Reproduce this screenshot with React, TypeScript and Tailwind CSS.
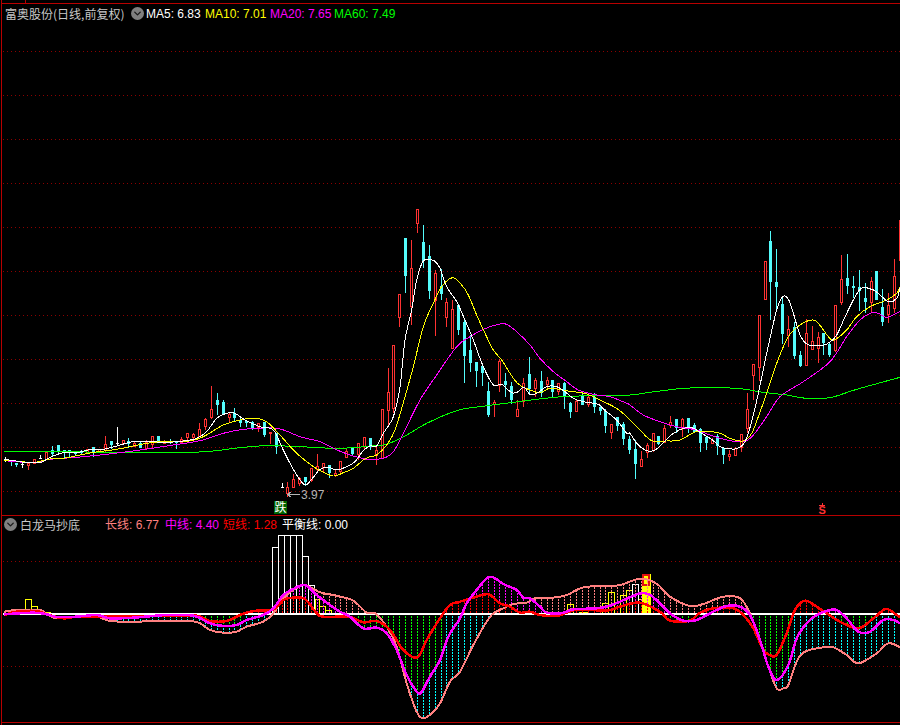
import { ChevronDown } from "lucide-react";

type Pt = [number, number];
type Candle = [string, number, number, number, number];

const RED = "#ff3232";
const CYAN = "#54fcfc";

// candle values are read off the zoomed crops: [colour, high, bodyTop, bodyBottom, low]
const candlesA: Candle[] = [
  ["w", 232, 236, 240, 245], ["c", 240, 240, 246, 258], ["c", 248, 250, 255, 262], ["w", 250, 252, 254, 265],
  ["r", 248, 250, 256, 270], ["r", 238, 238, 248, 250], ["w", 225, 235, 237, 238], ["r", 215, 215, 238, 240],
  ["c", 198, 210, 222, 228], ["c", 195, 195, 215, 225], ["c", 210, 210, 214, 235], ["c", 210, 210, 216, 232],
  ["c", 215, 218, 223, 228], ["c", 210, 212, 218, 225], ["r", 207, 208, 216, 218], ["c", 200, 200, 215, 230],
  ["r", 207, 208, 214, 215], ["r", 168, 192, 210, 215], ["c", 183, 183, 195, 208], ["w", 140, 190, 192, 195],
  ["r", 180, 181, 190, 195], ["c", 175, 182, 192, 205], ["r", 187, 188, 198, 200], ["c", 183, 190, 203, 205],
  ["r", 180, 185, 203, 205], ["r", 168, 168, 192, 205], ["c", 168, 168, 188, 190], ["r", 180, 182, 190, 192],
  ["c", 178, 182, 190, 192], ["c", 183, 183, 190, 208], ["r", 172, 178, 185, 190], ["r", 160, 160, 172, 182],
  ["r", 160, 163, 172, 180], ["r", 130, 148, 168, 170], ["r", 115, 118, 138, 150], ["r", 18, 88, 110, 118],
  ["c", 40, 60, 75, 105], ["c", 60, 65, 105, 105], ["r", 100, 102, 110, 125], ["c", 85, 98, 115, 122],
  ["c", 115, 120, 128, 140], ["c", 122, 122, 128, 142], ["c", 122, 125, 145, 150], ["r", 130, 130, 140, 155],
  ["c", 125, 125, 165, 170], ["r", 155, 155, 160, 192], ["c", 160, 160, 200, 222], ["w", 308, 322, 323, 325],
  ["r", 305, 322, 340, 350], ["r", 282, 298, 320, 325], ["r", 292, 295, 308, 318], ["c", 292, 292, 305, 318],
  ["r", 263, 263, 300, 305], ["r", 222, 258, 268, 280], ["r", 250, 250, 262, 275], ["c", 255, 255, 280, 295],
  ["r", 270, 278, 285, 290], ["r", 243, 243, 272, 280], ["r", 205, 213, 230, 235], ["c", 205, 205, 222, 228],
  ["r", 188, 190, 222, 240], ["r", 172, 172, 198, 208],
];
const candlesB: Candle[] = [
  ["c", 715, 715, 740, 750], ["r", 740, 750, 765, 795], ["r", 628, 628, 775, 778], ["r", 505, 577, 630, 680],
  ["r", 435, 435, 625, 640], ["r", 283, 283, 352, 380], ["c", 115, 115, 228, 278], ["r", 120, 205, 318, 375],
  ["r", 28, 28, 68, 98], ["c", 75, 127, 183, 205], ["c", 135, 168, 272, 298], ["r", 210, 220, 300, 408],
  ["c", 208, 258, 282, 300], ["r", 295, 305, 350, 380], ["r", 300, 328, 445, 445], ["c", 312, 315, 390, 405],
  ["c", 360, 365, 467, 548], ["c", 405, 450, 490, 515], ["c", 487, 487, 513, 560], ["c", 490, 498, 518, 558],
  ["c", 547, 573, 645, 650], ["r", 600, 605, 612, 650], ["r", 478, 484, 555, 575], ["c", 518, 543, 555, 590],
  ["c", 545, 558, 600, 612], ["r", 600, 628, 648, 650], ["r", 535, 550, 603, 620], ["c", 472, 522, 568, 580],
  ["r", 535, 540, 565, 590], ["c", 514, 543, 578, 590], ["r", 532, 541, 553, 565], ["c", 540, 541, 575, 592],
  ["r", 548, 550, 572, 585], ["c", 545, 550, 590, 628], ["c", 605, 610, 636, 654], ["r", 600, 604, 632, 632],
  ["c", 572, 588, 615, 615], ["r", 578, 591, 613, 622], ["c", 580, 592, 622, 638], ["c", 618, 622, 634, 645],
  ["c", 628, 632, 678, 698], ["r", 672, 673, 696, 716], ["c", 650, 652, 678, 692], ["c", 665, 672, 718, 735],
  ["c", 708, 716, 750, 762],
];
const candlesC: Candle[] = [
  ["c", 660, 688, 732, 778], ["r", 694, 718, 738, 740], ["r", 668, 675, 695, 714], ["r", 640, 640, 690, 695],
  ["c", 648, 648, 672, 675], ["r", 615, 623, 665, 670], ["r", 587, 606, 615, 625], ["c", 597, 598, 625, 640],
  ["r", 595, 596, 625, 652], ["c", 594, 595, 623, 640], ["c", 610, 615, 635, 640], ["c", 625, 628, 670, 695],
  ["c", 650, 652, 668, 690], ["r", 655, 660, 670, 672], ["c", 642, 648, 678, 705], ["c", 683, 684, 704, 732],
  ["r", 690, 702, 707, 722], ["r", 682, 685, 705, 708], ["r", 642, 643, 680, 695], ["r", 518, 568, 623, 640],
  ["r", 433, 433, 464, 540], ["r", 286, 286, 440, 482], ["r", 124, 124, 238, 238], ["c", 33, 63, 185, 300],
  ["c", 87, 186, 200, 275], ["c", 232, 252, 342, 372], ["r", 288, 328, 344, 380], ["c", 305, 320, 408, 418],
  ["c", 392, 405, 438, 440], ["r", 296, 340, 435, 437], ["r", 318, 364, 388, 390], ["r", 335, 350, 385, 430],
  ["c", 338, 340, 370, 405], ["c", 370, 372, 404, 412], ["r", 256, 256, 390, 395], ["r", 105, 178, 245, 255],
  ["c", 102, 175, 198, 222], ["c", 168, 198, 204, 235], ["c", 150, 202, 212, 272], ["c", 190, 235, 245, 278],
  ["r", 172, 184, 245, 280], ["c", 154, 154, 240, 240], ["c", 208, 260, 305, 318], ["r", 220, 256, 282, 308],
  ["r", 118, 168, 265, 280], ["r", 0, 0, 120, 120],
];

const candleX = (i: number) => Math.round(4.7 + 5.89 * i);

const candles: Candle[] = [
  ...candlesA.map((c): Candle => [c[0], 380 + c[1] / 3, 380 + c[2] / 3, 380 + c[3] / 3, 380 + c[4] / 3]),
  ...candlesB.map((c): Candle => [c[0], 200 + c[1] / 3, 200 + c[2] / 3, 200 + c[3] / 3, 200 + c[4] / 3]),
  ...candlesC.map((c): Candle => [c[0], 220 + c[1] / 3, 220 + c[2] / 3, 220 + c[3] / 3, 220 + c[4] / 3]),
];

const section = (pts: number[], ox: number, oy: number, from: number, to: number): Pt[] => {
  const out: Pt[] = [];
  for (let i = 0; i < pts.length; i += 2) {
    const x = ox + pts[i] / 3;
    if (x >= from && x < to) out.push([x, oy + pts[i + 1] / 3]);
  }
  return out;
};

const mainLine = (a: number[], b: number[], c: number[]) => [
  ...section(a, 0, 380, 0, 370),
  ...section(b, 370, 200, 370, 630),
  ...section(c, 630, 220, 630, 901),
];
const subLine = (a: number[], b: number[], c: number[]) => [
  ...section(a, 0, 515, 0, 340),
  ...section(b, 340, 560, 340, 620),
  ...section(c, 620, 560, 620, 901),
];

const ma5 = mainLine(
  [12,238,40,242,75,247,120,248,150,232,190,218,230,218,275,208,310,208,350,198,400,185,450,185,500,187,550,183,590,175,620,155,650,115,680,100,705,100,735,120,780,140,820,150,845,200,870,250,900,300,917,315,935,298,960,268,985,262,1010,270,1040,260,1065,245,1090,212],
  [0,738,20,738,40,700,70,650,90,560,105,420,125,330,140,240,160,183,190,181,210,205,230,260,260,305,285,360,310,420,340,500,370,555,395,553,425,578,445,575,462,562,480,583,500,580,530,560,560,560,585,575,610,595,640,605,685,613,705,632,740,660,770,700],
  [0,640,20,670,50,692,75,690,100,668,130,640,170,622,190,625,215,640,245,658,270,680,290,685,320,686,345,665,365,605,385,520,410,400,440,270,458,230,475,238,490,280,510,345,530,372,555,378,590,372,620,345,650,280,690,208,725,208,745,220,775,245,800,235,810,205],
);
const ma10 = mainLine(
  [12,240,60,244,100,248,150,237,190,235,240,225,275,218,350,208,400,198,470,186,550,185,590,178,620,165,670,135,730,118,770,115,800,125,840,165,880,210,920,245,960,272,1000,288,1030,278,1060,265,1090,240],
  [0,770,20,765,50,735,75,690,105,590,130,500,160,380,190,310,215,260,248,233,275,255,295,285,320,345,345,400,370,450,395,480,420,520,445,552,480,570,510,578,540,565,585,572,610,575,650,582,690,600,740,625,770,650],
  [0,600,30,630,65,662,110,663,150,660,200,635,265,638,300,655,340,663,365,640,385,590,410,520,440,430,475,350,510,315,545,300,565,310,595,350,612,360,650,330,680,290,720,260,770,240,800,220,810,200],
);
const ma20 = mainLine(
  [12,242,100,248,150,238,230,232,300,225,400,213,500,198,600,182,670,160,730,148,830,145,900,170,960,185,1000,205,1050,225,1100,238],
  [0,778,40,775,70,755,100,700,150,600,200,525,260,440,300,410,340,388,385,373,410,373,440,395,480,435,510,475,550,515,590,545,625,570,680,585,720,590,770,610],
  [0,555,40,585,90,605,140,620,200,630,240,645,290,660,340,665,370,645,410,590,450,530,520,485,600,425,650,350,690,300,720,280,745,280,770,292,810,275],
);
const ma60 = mainLine(
  [12,214,180,214,330,218,410,218,550,218,640,213,720,203,800,197,900,200,1000,205,1060,203],
  [0,738,50,733,110,705,170,670,260,632,330,620,430,607,500,598,580,590,700,586],
  [0,525,60,517,150,506,240,502,330,506,400,517,470,525,530,535,600,533,680,508,810,472],
);

const longLine = subLine(
  [12,290,50,285,120,285,140,298,170,310,230,305,290,305,330,318,400,320,480,318,570,318,600,325,630,345,670,353,710,350,740,335,790,320,820,295,850,250,880,225,915,210,960,232,1000,240],
  [0,110,40,122,80,158,105,160,140,200,170,260,200,370,230,455,250,475,275,460,300,430,330,365,360,335,400,255,440,185,460,160,490,145,520,132,560,128,585,115,640,113,680,105,730,82,800,78],
  [0,75,50,58,80,58,115,75,150,110,210,138,250,132,310,110,360,115,390,160,420,240,445,320,470,385,490,385,505,375,530,305,555,275,610,262,640,262,680,285,715,310,770,280,800,252,820,252,840,262],
);
const midLine = subLine(
  [12,298,100,293,140,298,170,306,230,305,290,300,330,310,400,308,500,300,580,302,630,325,670,333,710,330,740,315,790,300,820,280,850,240,880,222,915,210,950,240,990,270],
  [0,155,30,170,70,205,110,203,140,220,170,270,200,345,232,397,245,395,270,350,300,300,325,230,360,175,380,130,410,90,440,55,460,52,490,72,530,90,550,113,570,115,600,140,620,158,660,160,680,155,700,148,770,145,800,140],
  [0,125,60,100,90,105,120,130,150,160,190,182,230,180,280,155,320,138,360,140,390,165,420,240,445,320,470,360,505,315,530,235,560,190,590,165,630,150,650,150,680,175,715,215,750,215,790,180,820,180,840,190],
);
const shortLine = subLine(
  [12,300,50,290,110,288,140,298,190,310,230,305,300,305,400,305,500,302,590,302,630,318,680,318,720,300,760,288,820,283,850,255,880,248,915,252,950,295,970,305],
  [0,170,30,170,70,187,110,183,150,210,190,270,232,292,260,240,300,175,330,135,360,125,400,113,445,103,480,130,510,140,540,158,570,155,600,165,650,168,680,158,720,148,800,152],
  [0,140,60,128,120,155,150,182,210,182,240,158,280,145,340,145,370,165,400,205,430,270,450,285,470,285,500,220,525,150,555,122,590,140,620,160,660,185,715,205,760,175,790,150,805,148,840,172],
);

// catmull-rom through the read points, so the averages don't look like straight pieces
const smooth = (p: Pt[]) => {
  let d = `M${p[0][0]} ${p[0][1]}`;
  for (let i = 0; i < p.length - 1; i++) {
    const a = p[Math.max(i - 1, 0)];
    const b = p[i];
    const c = p[i + 1];
    const e = p[Math.min(i + 2, p.length - 1)];
    d += ` C${b[0] + (c[0] - a[0]) / 6} ${b[1] + (c[1] - a[1]) / 6} ${c[0] - (e[0] - b[0]) / 6} ${c[1] - (e[1] - b[1]) / 6} ${c[0]} ${c[1]}`;
  }
  return d;
};

const valueAt = (p: Pt[], x: number) => {
  if (x <= p[0][0]) return p[0][1];
  for (let i = 0; i < p.length - 1; i++) {
    if (x >= p[i][0] && x <= p[i + 1][0]) {
      const t = (x - p[i][0]) / (p[i + 1][0] - p[i][0]);
      return p[i][1] + (p[i + 1][1] - p[i][1]) * t;
    }
  }
  return p[p.length - 1][1];
};

const BASE = 613;
const greenToMid: Pt[] = [[0, 20], [195, 242], [345, 443], [750, 790]];
const greenToShort: Pt[] = [[262, 272], [443, 447], [665, 692], [836, 885]];
const inZone = (zones: Pt[], x: number) => zones.some(([a, b]) => x >= a && x <= b);

const grid = [51, 95, 139, 183, 227, 271, 315, 359, 403, 447, 491];

// [left, top]
const whiteBoxes: Pt[] = [[272, 547], [278, 535], [284, 535], [290, 535], [296, 535], [302, 556], [308, 585], [632, 584]];
const yellowBoxes: [number, number, number][] = [
  [25, 6, 599], [31, 6, 606], [46, 4, 612], [315, 4, 599], [319, 6, 606], [325, 6, 610],
  [567, 6, 604], [579, 9, 612], [602, 6, 603], [608, 6, 592], [620, 6, 595], [626, 6, 590], [638, 4, 599],
];

function Dropdown() {
  return (
    <span className="flex size-[13px] items-center justify-center rounded-full bg-[#808080]">
      <ChevronDown className="size-[11px] text-[#1c1c1c]" strokeWidth={3} />
    </span>
  );
}

function CandleMark({ c, x }: { c: Candle; x: number }) {
  const [kind, hi, top, bot, lo] = c;
  const color = kind === "r" ? RED : kind === "c" ? CYAN : "#ffffff";
  const h = Math.max(Math.round(bot) - Math.round(top), 1);
  return (
    <g>
      <line x1={x + 0.5} x2={x + 0.5} y1={Math.round(hi)} y2={Math.round(lo)} stroke={color} />
      {kind === "r" && <rect x={x - 0.5} y={Math.round(top) + 0.5} width={2} height={h} fill="#000" stroke={color} />}
      {kind === "c" && <rect x={x - 1} y={Math.round(top)} width={3} height={h} fill={color} />}
      {kind === "w" && <rect x={x - 1} y={Math.round(top)} width={3} height={1} fill={color} />}
    </g>
  );
}

function DotBar({ x, y, color }: { x: number; y: number; color: string }) {
  return <line x1={x + 0.5} x2={x + 0.5} y1={BASE} y2={y} stroke={color} strokeDasharray="2 1" />;
}

export default function App() {
  const xs = candles.map((_, i) => candleX(i));
  return (
    <div className="h-[725px] w-[900px] overflow-hidden bg-black pl-px font-['Liberation_Sans','Noto_Sans_CJK_SC',sans-serif] text-[12px] leading-none">
      <div className="flex h-full flex-col border-l border-[#b80000]">
        {/* top strip with the small tick */}
        <div className="h-[3px] shrink-0 pl-[23px]">
          <div className="h-full w-px bg-[#b80000]" />
        </div>

        {/* main chart */}
        <div className="flex h-[513px] shrink-0 flex-col border-y border-[#b80000]">
          <div className="flex h-[20px] shrink-0 items-center pb-px pl-[3px]">
            <span className="w-[126px] font-['Noto_Sans_CJK_SC',sans-serif] whitespace-nowrap text-[#c8c8c8]">富奥股份(日线,前复权)</span>
            <Dropdown />
            <span className="ml-[2px] w-[59px] whitespace-nowrap text-white">MA5: 6.83</span>
            <span className="w-[65px] whitespace-nowrap text-[#ffff00]">MA10: 7.01</span>
            <span className="w-[64px] whitespace-nowrap text-[#ff00ff]">MA20: 7.65</span>
            <span className="whitespace-nowrap text-[#00ff00]">MA60: 7.49</span>
          </div>
          <svg className="block" width={898} height={491} viewBox="2 24 898 491">
            <g shapeRendering="crispEdges">
              {grid.map((y) => (
                <line key={y} x1={3} x2={900} y1={y + 0.5} y2={y + 0.5} stroke="#8c0000" strokeDasharray="1 3" />
              ))}
              {candles.map((c, i) => (
                <CandleMark key={i} c={c} x={xs[i]} />
              ))}
              <path d={smooth(ma60)} fill="none" stroke="#00ff00" />
              <path d={smooth(ma20)} fill="none" stroke="#ff00ff" />
              <path d={smooth(ma10)} fill="none" stroke="#ffff00" />
              <path d={smooth(ma5)} fill="none" stroke="#ffffff" />
              <path d="M287.5 494.5H300M287.5 494.5l4 -3M287.5 494.5l4 3" fill="none" stroke="#b4b4b4" />
              <rect x={274} y={501} width={13} height={13} fill="#006400" />
              <rect x={819} y={505} width={6} height={1} fill="#ff3232" />
              <rect x={822} y={503} width={1} height={2} fill="#ff3232" />
            </g>
            <text x={301} y={499} fill="#b4b4b4" fontSize={12}>3.97</text>
            <text x={274.5} y={512} fill="#ffffff" fontSize={12} className="font-['Noto_Sans_CJK_SC',sans-serif]">跌</text>
            <text x={818.5} y={514} fill="#ff3232" fontSize={11} fontWeight={700}>S</text>
          </svg>
        </div>

        {/* indicator */}
        <div className="flex h-[207px] shrink-0 flex-col border-b border-[#b80000]">
          <div className="flex h-[17px] shrink-0 items-center pl-[2px]">
            <Dropdown />
            <span className="ml-[3px] w-[85px] font-['Noto_Sans_CJK_SC',sans-serif] whitespace-nowrap text-[#c8c8c8]">白龙马抄底</span>
            <span className="w-[60px] whitespace-nowrap text-[#ff8080]">长线: 6.77</span>
            <span className="w-[58px] whitespace-nowrap text-[#ff00ff]">中线: 4.40</span>
            <span className="w-[59px] whitespace-nowrap text-[#ff0000]">短线: 1.28</span>
            <span className="whitespace-nowrap text-white">平衡线: 0.00</span>
          </div>
          <svg className="block" width={898} height={189} viewBox="2 533 898 189">
            <g shapeRendering="crispEdges">
              <line x1={3} x2={900} y1={561.5} y2={561.5} stroke="#8c0000" strokeDasharray="1 3" />
              <line x1={3} x2={900} y1={666.5} y2={666.5} stroke="#8c0000" strokeDasharray="1 3" />

              {yellowBoxes.map(([x, w, top], i) => (
                <rect key={i} x={x + 0.5} y={top + 0.5} width={w} height={BASE - top} fill="none" stroke="#ffff00" />
              ))}
              {whiteBoxes.map(([x, top]) => (
                <rect key={x} x={x + 0.5} y={top + 0.5} width={6} height={BASE - top} fill="none" stroke="#ffffff" />
              ))}
              <rect x={642} y={574} width={9} height={40} fill="#ffff00" />
              <rect x={643} y={575} width={6} height={10} fill="none" stroke="#e01010" strokeWidth={2} />

              {xs.map((x) => {
                const l = valueAt(longLine, x);
                const m = valueAt(midLine, x);
                const s = valueAt(shortLine, x);
                return (
                  <g key={x}>
                    {l < BASE && <DotBar x={x} y={l} color="#ff8080" />}
                    {m < BASE && <DotBar x={x} y={m} color="#ff00ff" />}
                    {s < BASE && <DotBar x={x} y={s} color="#ff0000" />}
                    {l > BASE && <DotBar x={x} y={l} color="#00ffff" />}
                    {m > BASE && inZone(greenToMid, x) && <DotBar x={x} y={m} color="#00ff00" />}
                    {s > BASE && inZone(greenToShort, x) && <DotBar x={x} y={s} color="#00ff00" />}
                  </g>
                );
              })}

              <rect x={3} y={613} width={897} height={2} fill="#ffffff" />
              <path d={smooth(longLine)} fill="none" stroke="#ff8080" strokeWidth={2} />
              <path d={smooth(shortLine)} fill="none" stroke="#ff0000" strokeWidth={2.5} />
              <path d={smooth(midLine)} fill="none" stroke="#ff00ff" strokeWidth={2.5} />
            </g>
          </svg>
        </div>
      </div>
    </div>
  );
}
